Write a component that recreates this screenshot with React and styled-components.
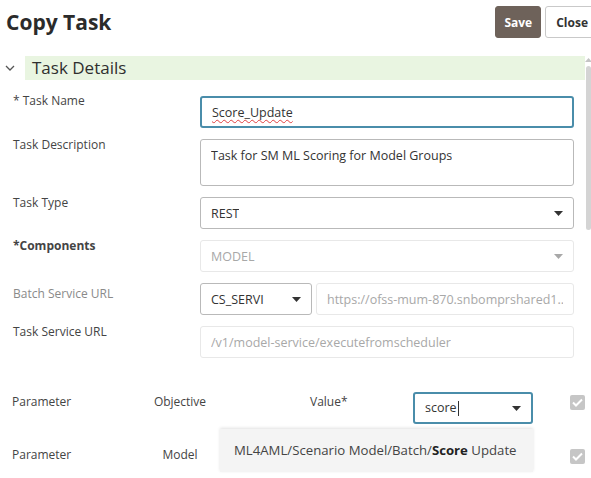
import styled, { createGlobalStyle } from "styled-components"

const GlobalStyle = createGlobalStyle`
  body {
    margin: 0;
    background: #fff;
    font-family: "Open Sans", "Noto Sans", sans-serif;
    color: #333;
  }
`

const Page = styled.div`
  width: 591px;
  height: 478px;
  overflow: hidden;
`

const Header = styled.header`
  display: flex;
  justify-content: space-between;
  align-items: center;
  height: 32px;
  padding: 6px 0 0 6px;
`

const Title = styled.h1`
  margin: 0;
  font-size: 21px;
  font-weight: 700;
  color: #2b2b2b;
`

const ButtonGroup = styled.div`
  display: flex;
  gap: 4px;
  margin-right: -8px;
`

const Button = styled.button`
  height: 32px;
  padding: 0 ${(p) => (p.$primary ? "8px" : "10px")};
  border-radius: 3px;
  border: 1px solid ${(p) => (p.$primary ? "#6e625a" : "#c9c9c9")};
  background: ${(p) => (p.$primary ? "#6e625a" : "#fff")};
  color: ${(p) => (p.$primary ? "#fff" : "#333")};
  font-family: inherit;
  font-size: 12px;
  font-weight: 700;
`

const Body = styled.div`
  display: flex;
  margin-top: 18px;
`

const Content = styled.div`
  flex: 1;
`

const ScrollBar = styled.div`
  width: 9px;
  display: flex;
  flex-direction: column;
  align-items: flex-end;
  padding-top: 2px;
`

const ScrollThumb = styled.div`
  width: 5px;
  height: 164px;
  margin-top: 4px;
  margin-right: 1px;
  border-radius: 3px;
  background: #d4d4d4;
`

const SectionHeader = styled.div`
  display: flex;
  align-items: center;
  height: 24px;
`

const Toggle = styled.div`
  width: 25px;
  display: flex;
  justify-content: center;
  padding-right: 5px;
  box-sizing: border-box;
`

const SectionTitle = styled.h2`
  flex: 1;
  margin: 0;
  height: 24px;
  line-height: 24px;
  padding-left: 7px;
  background: #e9f5e1;
  font-size: 17px;
  font-weight: 400;
  color: #2f2f2f;
`

const Form = styled.div`
  display: flex;
  flex-direction: column;
  gap: 11px;
  margin-top: 16px;
  padding-left: 13px;
`

const FieldRow = styled.div`
  display: grid;
  grid-template-columns: 187px 374px;
  align-items: start;
`

const Label = styled.div`
  margin-top: ${(p) => p.$offset ?? -3}px;
  line-height: 18px;
  font-size: 12px;
  font-weight: ${(p) => (p.$bold ? 700 : 400)};
  color: ${(p) => (p.$muted ? "#8a8a8a" : "#444")};
`

const Field = styled.div`
  box-sizing: border-box;
  display: flex;
  align-items: ${(p) => (p.$multiline ? "flex-start" : "center")};
  justify-content: space-between;
  gap: 8px;
  height: ${(p) => (p.$multiline ? 47 : 32)}px;
  padding: ${(p) => (p.$multiline ? "7px 10px" : "0 10px")};
  border-radius: 3px;
  border: ${(p) =>
    p.$focused ? "2px solid #4a8daa" : p.$disabled ? "1px solid #e8e8e8" : "1px solid #b9b9b9"};
  background: #fff;
  color: ${(p) => (p.$disabled ? "#a8a8a8" : "#333")};
  font-size: 12.5px;
  white-space: nowrap;
  overflow: hidden;
`

const FieldText = styled.span`
  overflow: hidden;
  padding-bottom: 3px;
  margin-bottom: -3px;
`

const Misspelled = styled.span`
  text-decoration-line: underline;
  text-decoration-style: wavy;
  text-decoration-color: #e04040;
  text-decoration-thickness: 1px;
  text-underline-offset: 2px;
  text-decoration-skip-ink: none;
`

const SplitField = styled.div`
  display: grid;
  grid-template-columns: 112px 1fr;
  gap: 4px;
`

const Caret = styled.span`
  display: inline-block;
  width: 1px;
  height: 15px;
  background: #333;
  margin-left: 1px;
  vertical-align: middle;
`

const ParamList = styled.div`
  display: flex;
  flex-direction: column;
  gap: 22px;
  margin-top: 34px;
`

const ParamRow = styled.div`
  display: grid;
  grid-template-columns: 128px 80px 193px 120px auto;
  align-items: start;
  height: 30px;
  padding-left: 12px;
  font-size: 12px;
  color: #444;
  line-height: 18px;
`

const ParamCell = styled.div`
  margin-top: ${(p) => p.$offset ?? 1}px;
  text-align: ${(p) => (p.$center ? "center" : "left")};
  padding-left: ${(p) => p.$indent ?? 0}px;
`

const SelectCell = styled.div`
  position: relative;
`

const Popup = styled.div`
  position: absolute;
  top: calc(100% + 5px);
  right: 0;
  width: 313px;
  height: 43px;
  box-sizing: border-box;
  padding-left: 14px;
  line-height: 43px;
  background: #f4f4f4;
  box-shadow: 0 -1px 3px rgba(0, 0, 0, 0.12);
  font-size: 13.2px;
  color: #444;
  white-space: nowrap;
  z-index: 2;
`

const Match = styled.b`
  color: #222;
`

const CheckBox = styled.div`
  width: 15px;
  height: 15px;
  margin-top: ${(p) => p.$offset ?? 3}px;
  margin-left: 37px;
  border-radius: 2px;
  background: #c6c6c6;
  display: flex;
  align-items: center;
  justify-content: center;
`

const DownArrow = ({ color = "#333" }) => (
  <svg width="9" height="5" viewBox="0 0 9 5">
    <path d="M0 0h9L4.5 5z" fill={color} />
  </svg>
)

const Chevron = () => (
  <svg width="10" height="6" viewBox="0 0 10 6">
    <path d="M1 1l4 4 4-4" fill="none" stroke="#555" strokeWidth="1.3" />
  </svg>
)

const UpArrow = () => (
  <svg width="7" height="4" viewBox="0 0 7 4">
    <path d="M0 4h7L3.5 0z" fill="#c4c4c4" />
  </svg>
)

const Check = () => (
  <svg width="11" height="9" viewBox="0 0 11 9">
    <path d="M1 4.5l3 3 6-6" fill="none" stroke="#fff" strokeWidth="2" />
  </svg>
)

const App = () => {
  return (
    <Page>
      <GlobalStyle />
      <Header>
        <Title>Copy Task</Title>
        <ButtonGroup>
          <Button $primary>Save</Button>
          <Button>Close</Button>
        </ButtonGroup>
      </Header>
      <Body>
        <Content>
          <SectionHeader>
            <Toggle>
              <Chevron />
            </Toggle>
            <SectionTitle>Task Details</SectionTitle>
          </SectionHeader>
          <Form>
            <FieldRow>
              <Label $offset={-4}>* Task Name</Label>
              <Field $focused>
                <FieldText>
                  <Misspelled>Score_Update</Misspelled>
                </FieldText>
              </Field>
            </FieldRow>
            <FieldRow>
              <Label>Task Description</Label>
              <Field $multiline>
                <FieldText>Task for SM ML Scoring for Model Groups</FieldText>
              </Field>
            </FieldRow>
            <FieldRow>
              <Label>Task Type</Label>
              <Field>
                <FieldText>REST</FieldText>
                <DownArrow />
              </Field>
            </FieldRow>
            <FieldRow>
              <Label $bold>*Components</Label>
              <Field $disabled>
                <FieldText>MODEL</FieldText>
                <DownArrow color="#a8a8a8" />
              </Field>
            </FieldRow>
            <FieldRow>
              <Label $muted $offset={2}>Batch Service URL</Label>
              <SplitField>
                <Field>
                  <FieldText>CS_SERVI</FieldText>
                  <DownArrow />
                </Field>
                <Field $disabled>
                  <FieldText>https://ofss-mum-870.snbomprshared1..</FieldText>
                </Field>
              </SplitField>
            </FieldRow>
            <FieldRow>
              <Label>Task Service URL</Label>
              <Field $disabled>
                <FieldText>/v1/model-service/executefromscheduler</FieldText>
              </Field>
            </FieldRow>
          </Form>
          <ParamList>
            <ParamRow>
              <ParamCell>Parameter</ParamCell>
              <ParamCell $center>Objective</ParamCell>
              <ParamCell $indent={90}>Value*</ParamCell>
              <SelectCell>
                <Field $focused>
                  <FieldText>
                    score
                    <Caret />
                  </FieldText>
                  <DownArrow />
                </Field>
                <Popup>
                  ML4AML/Scenario Model/Batch/<Match>Score</Match> Update
                </Popup>
              </SelectCell>
              <CheckBox>
                <Check />
              </CheckBox>
            </ParamRow>
            <ParamRow>
              <ParamCell $offset={2}>Parameter</ParamCell>
              <ParamCell $center $offset={2}>Model</ParamCell>
              <ParamCell />
              <SelectCell />
              <CheckBox $offset={5}>
                <Check />
              </CheckBox>
            </ParamRow>
          </ParamList>
        </Content>
        <ScrollBar>
          <UpArrow />
          <ScrollThumb />
        </ScrollBar>
      </Body>
    </Page>
  )
}

export default App
